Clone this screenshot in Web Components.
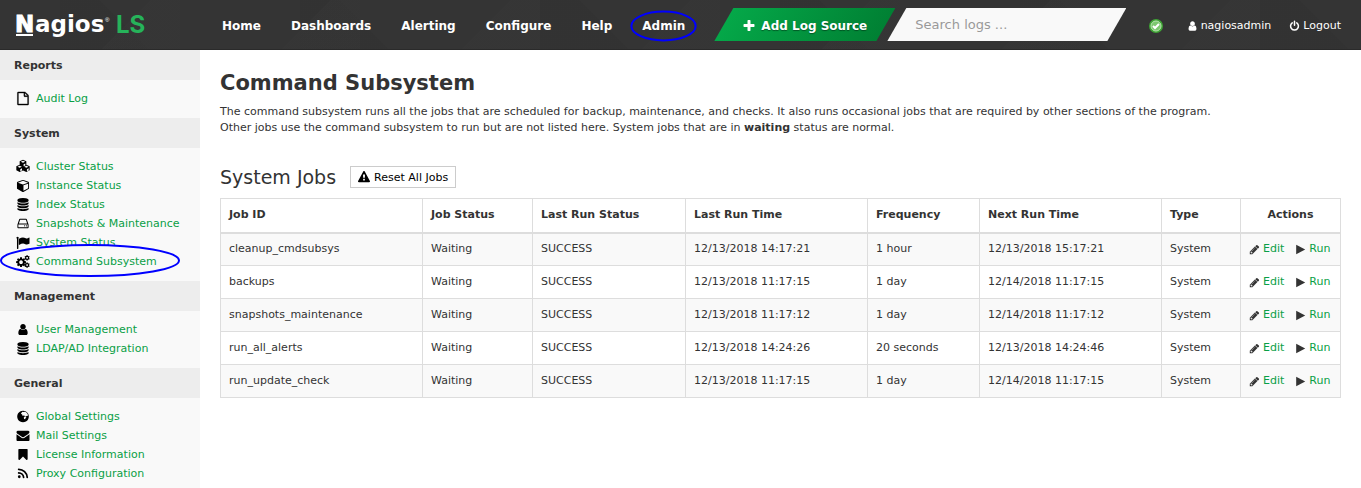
<!DOCTYPE html>
<html lang="en">
<head>
<meta charset="utf-8">
<title>Command Subsystem</title>
<style>
  html, body {
    margin: 0;
    min-height: 100%;
  }
  body {
    font: 11px/16px Verdana, "DejaVu Sans", sans-serif;
    color: #333;
    background: #fff;
  }
</style>
</head>
<body>
<ls-app>
  <ls-header slot="header">
    <ls-nav-link href="#home">Home</ls-nav-link>
    <ls-nav-link href="#dashboards">Dashboards</ls-nav-link>
    <ls-nav-link href="#alerting">Alerting</ls-nav-link>
    <ls-nav-link href="#configure">Configure</ls-nav-link>
    <ls-nav-link href="#help">Help</ls-nav-link>
    <ls-nav-link href="#admin" marked>Admin</ls-nav-link>
  </ls-header>

  <ls-menu slot="sidebar" heading="Reports">
    <ls-menu-link icon="file" href="#audit">Audit Log</ls-menu-link>
  </ls-menu>
  <ls-menu slot="sidebar" heading="System">
    <ls-menu-link icon="cubes" href="#cluster">Cluster Status</ls-menu-link>
    <ls-menu-link icon="cube" href="#instance">Instance Status</ls-menu-link>
    <ls-menu-link icon="database" href="#index">Index Status</ls-menu-link>
    <ls-menu-link icon="hdd" href="#snapshots">Snapshots &amp; Maintenance</ls-menu-link>
    <ls-menu-link icon="flag" href="#system">System Status</ls-menu-link>
    <ls-menu-link icon="cogs" href="#command" marked>Command Subsystem</ls-menu-link>
  </ls-menu>
  <ls-menu slot="sidebar" heading="Management">
    <ls-menu-link icon="user" href="#users">User Management</ls-menu-link>
    <ls-menu-link icon="database" href="#ldap">LDAP/AD Integration</ls-menu-link>
  </ls-menu>
  <ls-menu slot="sidebar" heading="General">
    <ls-menu-link icon="globe" href="#global">Global Settings</ls-menu-link>
    <ls-menu-link icon="envelope" href="#mail">Mail Settings</ls-menu-link>
    <ls-menu-link icon="bookmark" href="#license">License Information</ls-menu-link>
    <ls-menu-link icon="rss" href="#proxy">Proxy Configuration</ls-menu-link>
  </ls-menu>

  <ls-page heading="Command Subsystem">
    <span slot="intro">The command subsystem runs all the jobs that are scheduled for backup, maintenance, and checks. It also runs occasional jobs that are required by other sections of the program.<br>Other jobs use the command subsystem to run but are not listed here. System jobs that are in <b>waiting</b> status are normal.</span>
    <ls-jobs></ls-jobs>
  </ls-page>
</ls-app>

<script>
const ICONS = {
  file: '<path d="M1596 380q28 28 48 76t20 88v1152q0 40-28 68t-68 28h-1344q-40 0-68-28t-28-68v-1600q0-40 28-68t68-28h896q40 0 88 20t76 48zm-444-244v376h376q-10-29-22-41l-313-313q-12-12-41-22zm384 1528v-1024h-416q-40 0-68-28t-28-68v-416h-768v1536h1280z" stroke="currentColor" stroke-width="60"/>',
  cube: '<path transform="translate(64)" d="M896 1629l640-349v-636l-640 233v752zm-64-865l698-254-698-254-698 254zm832-252v768q0 35-18 65t-49 47l-704 384q-28 16-61 16t-61-16l-704-384q-31-17-49-47t-18-65v-768q0-40 23-73t61-47l704-256q22-8 44-8t44 8l704 256q38 14 61 47t23 73z"/>',
  database: '<path d="M896 768q237 0 443-43t325-127v170q0 69-103 128t-280 94-385 34-385-34-280-94-103-128v-170q119 84 325 127t443 43zm0 768q237 0 443-43t325-127v170q0 69-103 128t-280 94-385 34-385-34-280-94-103-128v-170q119 84 325 127t443 43zm0-384q237 0 443-43t325-127v170q0 69-103 128t-280 94-385 34-385-34-280-94-103-128v-170q119 84 325 127t443 43zm0-1152q208 0 385 34t280 94 103 128v128q0 69-103 128t-280 94-385 34-385-34-280-94-103-128v-128q0-69 103-128t280-94 385-34z"/>',
  hdd: '<path fill-rule="evenodd" d="M480 256h832q90 0 118 80l220 660q14 40 14 90v354q0 96-96 96h-1344q-96 0-96-96v-354q0-50 14-90l220-660q28-80 118-80zm20 128l-172 512h1136l-172-512zm-244 640v384h1280v-384z"/><circle cx="1376" cy="1216" r="80"/><circle cx="1120" cy="1216" r="80"/>',
  flag: '<path d="M192 128a128 128 0 0 1 64 238v1362q0 64-64 64h-64q-64 0-64-64v-1362a128 128 0 0 1 128-238zm1600 128v763q0 38-38 60-180 100-330 100-110 0-210-54-160-78-310-78-210 0-490 168-94 50-94-36v-742q0-34 33-56 290-177 535-177 180 0 390 99 70 34 150 34 120 0 304-119 50-22 50 38z"/>',
  user: '<path d="M1536 1399q0 109-62 187t-151 78h-854q-88 0-151-78t-62-187q0-85 8-160t32-152 58-131 94-89 135-35q131 128 313 128t313-128q76 0 135 35t94 89 58 131 32 152 8 160zm-256-887q0 159-112 272t-272 112-272-112-112-272 112-272 272-112 272 112 112 272z"/>',
  envelope: '<path d="M1792 710v794q0 66-47 113t-113 47h-1472q-66 0-113-47t-47-113v-794q44 49 101 87 362 246 497 345 57 42 92 66t95 48 110 24h2q51 0 110-24t95-48 92-66q170-123 498-345 57-39 100-87zm0-294q0 79-49 151t-122 123q-376 261-468 325-10 7-42 31t-54 38-52 33-58 27-50 9h-2q-23 0-50-9t-58-27-52-33-54-38-42-31q-91-64-262-182t-205-143q-62-42-117-115t-55-137q0-78 41-130t119-52h1472q65 0 112 47t48 113z"/>',
  bookmark: '<path d="M1420 128q23 0 44 9 33 13 52 41t20 62v1289q0 34-20 62t-52 41q-19 8-44 8-48 0-83-32l-441-424-441 424q-36 33-83 33-23 0-44-9-33-13-52-41t-20-62v-1289q0-34 20-62t52-41q21-9 44-9h1048z"/>',
  rss: '<circle cx="384" cy="1344" r="192"/><path fill="none" stroke="currentColor" stroke-width="240" stroke-linecap="round" d="M300 812a680 680 0 0 1 680 620M300 320a1180 1180 0 0 1 1180 1110"/>',
  globe: '<path fill-rule="evenodd" d="M896 96a800 800 0 1 0 2 0zM800 250l-200 260 180 100 40 180 240-40 160 160 180-100 180-20-40-230-220-240-190-90-120 60zM1130 900l-130 150 50 180 140 60 70-180 120-140z"/>',
  cogs: '<path fill-rule="evenodd" d="M500 320h250l34 190 80 34 158-108 166 166-108 158 34 80 190 34v240l-190 34-34 80 108 158-166 166-158-108-80 34-34 190h-250l-34-190-80-34-158 108-166-166 108-158-34-80-190-34v-240l190-34 34-80-108-158 166-166 158 108 80-34zm125 420a255 255 0 1 0 2 0zM1370 25h180l20 115 50 28 115-38 80 145-90 80v70l90 80-80 145-115-38-50 28-20 115h-180l-20-115-50-28-115 38-80-145 90-80v-70l-90-80 80-145 115 38 50-28zm90 240a120 120 0 1 0 2 0zM1370 1030h180l20 115 50 28 115-38 80 145-90 80v70l90 80-80 145-115-38-50 28-20 115h-180l-20-115-50-28-115 38-80-145 90-80v-70l-90-80 80-145 115 38 50-28zm90 240a120 120 0 1 0 2 0z"/>',
  cubes: '<path transform="translate(-134 -102) scale(1.150)" fill-rule="evenodd" d="M896 64l400 170v430l400 180v480l-400 210-400-200-400 200-400-210v-480l400-180v-430zm0 125l-260 112 260 113 260-113zm70 395v245l210-90v-245zM496 790l-260 112 260 113 260-113zm70 400v250l210-105v-245zM1296 790l-260 112 260 113 260-113zm70 400v250l210-105v-245z"/>',
  pencil: '<path d="M491 1536l91-91-235-235-91 91v107h128v128h107zm523-928q0-22-22-22-10 0-17 7l-542 542q-7 7-7 17 0 22 22 22 10 0 17-7l542-542q7-7 7-17zm-54-192l416 416-832 832h-416v-416zm683 96q0 53-37 90l-166 166-416-416 166-165q36-38 90-38 53 0 91 38l235 234q37 39 37 91z"/>',
  play: '<path d="M192 128l1472 768-1472 768z"/>',
  plus: '<path d="M1600 736v192q0 40-28 68t-68 28h-416v416q0 40-28 68t-68 28h-192q-40 0-68-28t-28-68v-416h-416q-40 0-68-28t-28-68v-192q0-40 28-68t68-28h416v-416q0-40 28-68t68-28h192q40 0 68 28t28 68v416h416q40 0 68 28t28 68z"/>',
  power: '<path fill="none" stroke="currentColor" stroke-width="250" stroke-linecap="round" d="M526 390a640 640 0 1 0 740 0M896 130v640"/>',
  warning: '<path d="M1024 1375v-190q0-14-10-24t-22-9h-192q-13 0-22 9t-10 24v190q0 14 10 24t22 9h192q13 0 22-9t10-24zm-2-374l18-459q0-12-10-19-13-11-24-11h-220q-11 0-24 11-10 7-10 21l17 457q0 10 10 16t24 7h185q14 0 23-7t11-16zm-14-934l768 1408q35 63-2 126-17 29-46 46t-64 17h-1536q-34 0-64-17t-46-46q-37-63-2-126l768-1408q17-31 47-49t65-18 65 18 47 49z"/>',
};

class LsIcon extends HTMLElement {
  constructor() {
    super();
    this.attachShadow({ mode: 'open' }).innerHTML = `
      <style>
        :host {
          display: inline-block;
          width: 12px;
          height: 12px;
          flex: none;
        }
        svg {
          display: block;
          width: 100%;
          height: 100%;
          fill: currentColor;
          overflow: visible;
        }
      </style>
      <svg viewBox="0 0 1792 1792" aria-hidden="true">${ICONS[this.getAttribute('name')] || ''}</svg>
    `;
  }
}

class LsNavLink extends HTMLElement {
  constructor() {
    super();
    this.attachShadow({ mode: 'open' }).innerHTML = `
      <style>
        :host {
          display: block;
          position: relative;
        }
        a {
          color: #fff;
          font-size: 12px;
          font-weight: bold;
          text-decoration: none;
        }
        svg {
          display: none;
          position: absolute;
          left: -12px;
          top: -7px;
          width: calc(100% + 24px);
          height: 30px;
          overflow: visible;
          pointer-events: none;
        }
        :host([marked]) svg {
          display: block;
        }
      </style>
      <a href="${this.getAttribute('href')}"><slot></slot></a>
      <svg><ellipse cx="50%" cy="50%" rx="48%" ry="48%" fill="none" stroke="#00f" stroke-width="2"/></svg>
    `;
  }
}

class LsHeader extends HTMLElement {
  constructor() {
    super();
    this.attachShadow({ mode: 'open' }).innerHTML = `
      <style>
        :host {
          display: grid;
          grid-template-columns: 222px auto 1fr auto;
          align-items: center;
          height: 50px;
          box-sizing: border-box;
          padding-right: 20px;
          border-bottom: 1px solid #2a2a2a;
          color: #fff;
          background:
            linear-gradient(135deg, transparent 50%, #38383866 50%) 0 0 / 180px 120px,
            linear-gradient(45deg, #30303066 50%, transparent 50%) 60px 0 / 240px 160px,
            #343434;
        }
        .logo {
          display: flex;
          align-items: center;
          margin-left: 15px;
          text-decoration: none;
          color: #fff;
        }
        .logo svg {
          width: 136px;
          height: 36px;
        }
        nav {
          display: flex;
          gap: 30px;
          padding-top: 3px;
        }
        .tools {
          display: flex;
          margin-left: 29px;
        }
        .add {
          display: flex;
          align-items: center;
          gap: 5px;
          height: 33px;
          width: 181px;
          padding: 2px 0 0 28px;
          border: 0;
          color: #fff;
          background: linear-gradient(120deg, #05ac4b, #007c31);
          clip-path: polygon(19px 0, 100% 0, calc(100% - 19px) 100%, 0 100%);
          font: bold 12px Verdana, "DejaVu Sans", sans-serif;
          text-shadow: 0 1px 1px #0006;
          white-space: nowrap;
        }
        .add ls-icon {
          width: 14px;
          height: 14px;
        }
        .search {
          width: 239px;
          height: 33px;
          margin-left: -8px;
          box-sizing: border-box;
          padding: 0 28px;
          border: 0;
          background: #f9f9f9;
          clip-path: polygon(19px 0, 100% 0, calc(100% - 19px) 100%, 0 100%);
          font: 13px Verdana, "DejaVu Sans", sans-serif;
        }
        .search::placeholder {
          color: #999;
        }
        .account {
          display: flex;
          align-items: center;
          gap: 18px;
          padding-top: 2px;
        }
        .account a {
          display: flex;
          align-items: center;
          gap: 3px;
          color: #fff;
          text-decoration: none;
        }
        .account a ls-icon {
          width: 11px;
        }
        .status {
          width: 14px;
          height: 14px;
          margin-right: 6px;
        }
      </style>
      <a class="logo" href="#home" aria-label="Nagios LS">
        <svg viewBox="0 0 136 36">
          <text x="0" y="25" font-family="DejaVu Sans" font-size="23" font-weight="bold" fill="#fff" stroke="#fff">N</text>
          <text x="20" y="25" font-family="DejaVu Sans" font-size="23" font-weight="bold" fill="#fff">agios</text>
          <text x="90" y="15" font-family="Liberation Sans" font-size="6" fill="#fff">®</text>
          <text x="101" y="26" font-family="Inter" font-size="24" font-weight="bold" fill="#26b35a">LS</text>
          <path d="M1 28h17" stroke="#fff" stroke-width="2"/>
        </svg>
      </a>
      <nav><slot></slot></nav>
      <div class="tools">
        <button class="add" type="button"><ls-icon name="plus"></ls-icon>Add Log Source</button>
        <input class="search" type="search" placeholder="Search logs ..." aria-label="Search logs">
      </div>
      <div class="account">
        <svg class="status" viewBox="0 0 14 14">
          <circle cx="7" cy="7" r="7" fill="#3fa535"/>
          <circle cx="7" cy="7" r="5" fill="#7cc76f" stroke="#b9e3b0"/>
          <path d="M4 7l2 2 4-4" fill="none" stroke="#fff" stroke-width="2"/>
        </svg>
        <a href="#profile"><ls-icon name="user"></ls-icon>nagiosadmin</a>
        <a href="#logout"><ls-icon name="power"></ls-icon>Logout</a>
      </div>
    `;
  }
}

class LsMenu extends HTMLElement {
  constructor() {
    super();
    this.attachShadow({ mode: 'open' }).innerHTML = `
      <style>
        :host {
          display: block;
        }
        h2 {
          margin: 0;
          padding: 8px 14px 6px;
          background: #ededed;
          font-size: 11px;
          line-height: 16px;
        }
        div {
          display: grid;
          grid-auto-rows: 19px;
          padding: 9px 14px 10px;
        }
      </style>
      <h2>${this.getAttribute('heading')}</h2>
      <div><slot></slot></div>
    `;
  }
}

class LsMenuLink extends HTMLElement {
  constructor() {
    super();
    this.attachShadow({ mode: 'open' }).innerHTML = `
      <style>
        :host {
          display: flex;
          align-items: center;
          position: relative;
        }
        a {
          display: flex;
          align-items: center;
          gap: 4px;
          color: #0a9f46;
          text-decoration: none;
          white-space: nowrap;
        }
        ls-icon {
          width: 18px;
          height: 13px;
          color: #000;
        }
        svg {
          display: none;
          position: absolute;
          left: -13px;
          top: -7px;
          width: 178px;
          height: 31px;
          overflow: visible;
          pointer-events: none;
        }
        :host([marked]) svg {
          display: block;
        }
      </style>
      <a href="${this.getAttribute('href')}"><ls-icon name="${this.getAttribute('icon')}"></ls-icon><slot></slot></a>
      <svg><ellipse cx="50%" cy="50%" rx="50%" ry="50%" fill="none" stroke="#00f" stroke-width="2"/></svg>
    `;
  }
}

class LsPage extends HTMLElement {
  constructor() {
    super();
    this.attachShadow({ mode: 'open' }).innerHTML = `
      <style>
        :host {
          display: block;
          padding: 19px 20px;
        }
        h1 {
          margin: 0 0 7px;
          font-size: 21px;
          line-height: 28px;
        }
        p {
          margin: 0 0 30px;
        }
      </style>
      <h1>${this.getAttribute('heading')}</h1>
      <p><slot name="intro"></slot></p>
      <slot></slot>
    `;
  }
}

const JOBS = [
  ['cleanup_cmdsubsys', 'Waiting', 'SUCCESS', '12/13/2018 14:17:21', '1 hour', '12/13/2018 15:17:21', 'System'],
  ['backups', 'Waiting', 'SUCCESS', '12/13/2018 11:17:15', '1 day', '12/14/2018 11:17:15', 'System'],
  ['snapshots_maintenance', 'Waiting', 'SUCCESS', '12/13/2018 11:17:12', '1 day', '12/14/2018 11:17:12', 'System'],
  ['run_all_alerts', 'Waiting', 'SUCCESS', '12/13/2018 14:24:26', '20 seconds', '12/13/2018 14:24:46', 'System'],
  ['run_update_check', 'Waiting', 'SUCCESS', '12/13/2018 11:17:15', '1 day', '12/14/2018 11:17:15', 'System'],
];

// column widths are proportions, the table itself fills the page
const COLUMNS = [202, 110, 153, 182, 112, 182, 79, 100];

class LsJobs extends HTMLElement {
  constructor() {
    super();
    const rows = JOBS.map((job) => `
      <tr>
        ${job.map((value) => `<td>${value}</td>`).join('')}
        <td><div class="actions">
          <a href="#edit"><ls-icon name="pencil"></ls-icon>Edit</a>
          <a href="#run"><ls-icon name="play"></ls-icon>Run</a>
        </div></td>
      </tr>
    `).join('');

    this.attachShadow({ mode: 'open' }).innerHTML = `
      <style>
        :host {
          display: block;
        }
        .title {
          display: flex;
          align-items: center;
          gap: 14px;
          margin-bottom: 10px;
        }
        h2 {
          margin: 0;
          font-size: 19px;
          font-weight: normal;
          line-height: 22px;
        }
        button {
          display: flex;
          align-items: center;
          gap: 4px;
          height: 22px;
          padding: 0 7px;
          border: 1px solid #ccc;
          background: #fff;
          color: #000;
          font: 11px Verdana, "DejaVu Sans", sans-serif;
        }
        table {
          width: 100%;
          table-layout: fixed;
          border-collapse: collapse;
        }
        th, td {
          box-sizing: border-box;
          height: 33px;
          padding: 0 8px;
          border: 1px solid #ddd;
          text-align: left;
          white-space: nowrap;
        }
        th {
          height: 34px;
          border-bottom-width: 2px;
        }
        th:last-child {
          text-align: center;
        }
        tbody tr:nth-child(odd) {
          background: #f9f9f9;
        }
        .actions {
          display: flex;
          gap: 11px;
        }
        a {
          display: flex;
          align-items: center;
          gap: 3px;
          color: #0a9f46;
          text-decoration: none;
        }
        a ls-icon {
          width: 11px;
          height: 11px;
          color: #333;
        }
      </style>
      <div class="title">
        <h2>System Jobs</h2>
        <button type="button"><ls-icon name="warning"></ls-icon>Reset All Jobs</button>
      </div>
      <table>
        <colgroup>${COLUMNS.map((width) => `<col style="width: ${width}px">`).join('')}</colgroup>
        <thead>
          <tr>
            <th>Job ID</th><th>Job Status</th><th>Last Run Status</th><th>Last Run Time</th>
            <th>Frequency</th><th>Next Run Time</th><th>Type</th><th>Actions</th>
          </tr>
        </thead>
        <tbody>${rows}</tbody>
      </table>
    `;
  }
}

class LsApp extends HTMLElement {
  constructor() {
    super();
    this.attachShadow({ mode: 'open' }).innerHTML = `
      <style>
        :host {
          display: grid;
          grid-template: auto 1fr / 200px 1fr;
          min-height: 100vh;
        }
        header {
          grid-column: 1 / 3;
        }
        aside {
          background: #f9f9f9;
        }
        main {
          min-width: 0;
        }
      </style>
      <header><slot name="header"></slot></header>
      <aside><slot name="sidebar"></slot></aside>
      <main><slot></slot></main>
    `;
  }
}

customElements.define('ls-icon', LsIcon);
customElements.define('ls-nav-link', LsNavLink);
customElements.define('ls-header', LsHeader);
customElements.define('ls-menu', LsMenu);
customElements.define('ls-menu-link', LsMenuLink);
customElements.define('ls-page', LsPage);
customElements.define('ls-jobs', LsJobs);
customElements.define('ls-app', LsApp);
</script>
</body>
</html>
